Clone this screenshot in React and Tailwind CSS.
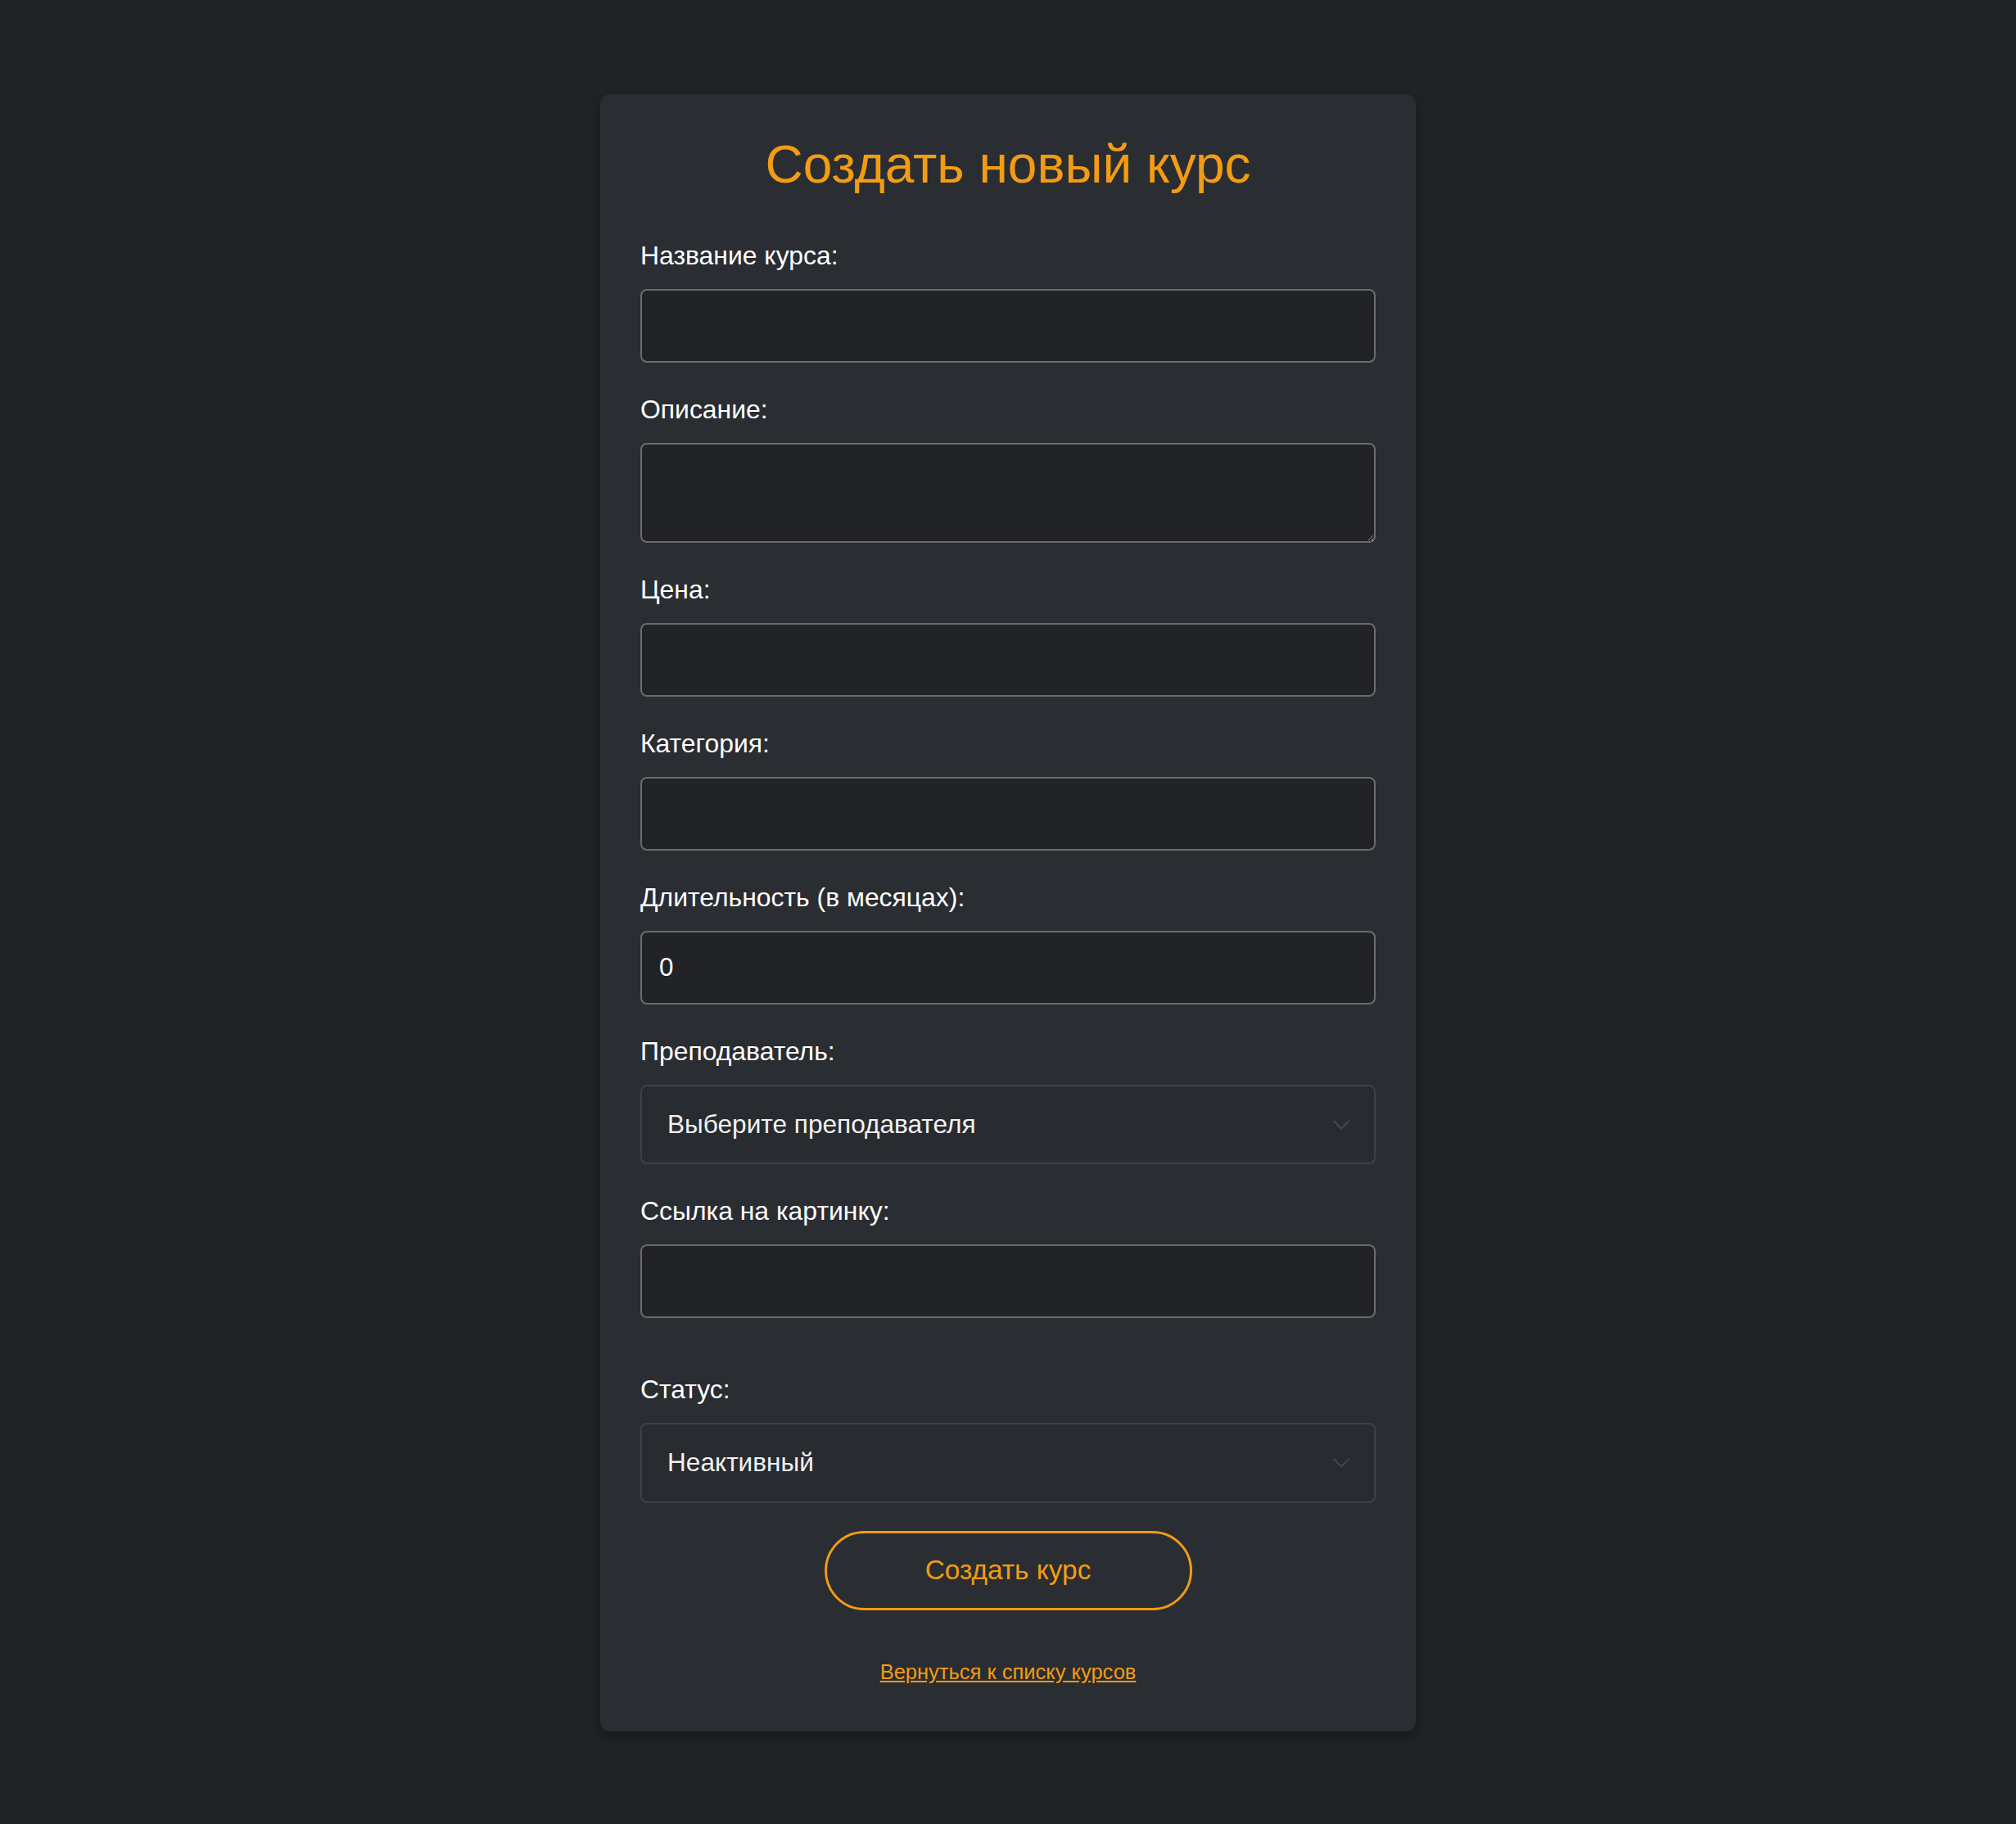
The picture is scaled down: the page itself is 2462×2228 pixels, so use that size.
import React from 'react'

const inputCls =
  'block w-full h-[90px] rounded-[8px] border-2 border-[#6b6b6b] bg-[#212327] px-[21px] text-[31.4px] text-white outline-none'

const selectCls =
  'block w-full appearance-none rounded-[8px] border-2 border-[#3e4146] bg-[#282b30] px-[31px] text-[31.6px] text-[#f2f2f2] outline-none'

const Field = ({ label, children, className = '' }) => (
  <div className={`mb-[39px] ${className}`}>
    <label className="mb-[23px] block text-[31.9px] leading-[36px] text-white">{label}</label>
    {children}
  </div>
)

const Chevron = () => (
  <svg
    className="pointer-events-none absolute right-[31px] top-1/2 -translate-y-1/2"
    width="22"
    height="13"
    viewBox="0 0 22 13"
    fill="none"
  >
    <path d="M1.5 1.5 L11 11 L20.5 1.5" stroke="#44474c" strokeWidth="2.2" />
  </svg>
)

const SelectBox = ({ options, height = 'h-[97px]' }) => (
  <div className="relative">
    <select className={`${selectCls} ${height}`} defaultValue={options[0]}>
      {options.map((o) => (
        <option key={o}>{o}</option>
      ))}
    </select>
    <Chevron />
  </div>
)

export default function App() {
  return (
    <div className="min-h-screen bg-[#212327] py-[115px] font-['Liberation_Sans',Arial,sans-serif]">
      <div className="mx-auto w-[996px] rounded-[12px] bg-[#2a2d32] px-[49px] pt-[50px] pb-[57px] shadow-[0_6px_18px_rgba(0,0,0,0.35)]">
        <h1 className="text-center text-[64px] leading-[72px] font-normal text-[#f39c12]">
          Создать новый курс
        </h1>

        <form className="mt-[57px] flex flex-col" onSubmit={(e) => e.preventDefault()}>
          <Field label="Название курса:">
            <input type="text" className={inputCls} />
          </Field>

          <Field label="Описание:">
            <textarea className={`${inputCls} h-[122px] py-[14px]`} />
          </Field>

          <Field label="Цена:">
            <input type="text" className={inputCls} />
          </Field>

          <Field label="Категория:">
            <input type="text" className={inputCls} />
          </Field>

          <Field label="Длительность (в месяцах):">
            <input type="text" defaultValue="0" className={inputCls} />
          </Field>

          <Field label="Преподаватель:">
            <SelectBox options={['Выберите преподавателя']} />
          </Field>

          <Field label="Ссылка на картинку:">
            <input type="text" className={inputCls} />
          </Field>

          <div className="mt-[30px]">
            <label className="mb-[23px] block text-[31.9px] leading-[36px] text-white">Статус:</label>
            <SelectBox options={['Неактивный', 'Активный']} height="h-[98px]" />
          </div>

          <button
            type="submit"
            className="mx-auto mt-[34px] h-[97px] w-[449px] rounded-full border-[3px] border-[#f39c12] bg-transparent text-[33.4px] text-[#f39c12]"
          >
            Создать курс
          </button>

          <div className="mt-[61px] text-center">
            <a href="#" className="text-[25.5px] leading-[29px] text-[#f39c12] underline">
              Вернуться к списку курсов
            </a>
          </div>
        </form>
      </div>
    </div>
  )
}
